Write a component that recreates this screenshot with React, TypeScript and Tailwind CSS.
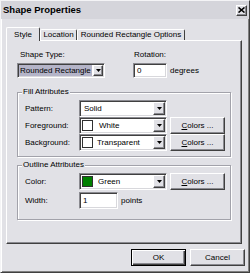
import type { ReactNode } from "react";

const sunken =
  "border border-t-[#8a8a90] border-l-[#8a8a90] border-r-white border-b-white shadow-[inset_1px_1px_0_#404040,inset_-1px_-1px_0_#d8d8dc]";
const raised =
  "border border-t-white border-l-white border-r-[#404040] border-b-[#404040] shadow-[inset_-1px_-1px_0_#8a8a90]";
const etched =
  "border border-[#a2a2aa] shadow-[1px_1px_0_#fff,inset_1px_1px_0_#fff]";

function DropArrow({ narrow }: { narrow?: boolean }) {
  return (
    <span
      className={`flex shrink-0 items-center justify-center bg-[#e1e1e6] ${raised} ${narrow ? "w-[10px]" : "w-[12px]"}`}
    >
      <svg width="5" height="3" viewBox="0 0 5 3">
        <path d="M0 0h5L2.5 3z" fill="#000" />
      </svg>
    </span>
  );
}

function Select({
  className,
  narrow,
  children,
}: {
  className: string;
  narrow?: boolean;
  children: ReactNode;
}) {
  return (
    <div className={`flex items-stretch bg-white p-[1px] ${sunken} ${className}`}>
      <div className="flex min-w-0 flex-1 items-center overflow-hidden whitespace-nowrap">{children}</div>
      <DropArrow narrow={narrow} />
    </div>
  );
}

function Swatch({ color }: { color: string }) {
  return <span className={`ml-[1px] h-[11px] w-[11px] shrink-0 border border-[#303030] ${color}`} />;
}

function Button({ children, isDefault }: { children: ReactNode; isDefault?: boolean }) {
  return (
    <button
      className={
        isDefault
          ? "flex h-[17px] w-[55px] items-center justify-center border border-black bg-[#e1e1e6] shadow-[inset_1px_1px_0_#fff,inset_-1px_-1px_0_#404040,inset_-2px_-2px_0_#8a8a90]"
          : `flex h-[17px] w-[55px] items-center justify-center bg-[#e1e1e6] ${raised}`
      }
    >
      {children}
    </button>
  );
}

function ColorsButton() {
  return (
    <div className="ml-[3px]">
      <Button>
        <span>
          <span className="underline">C</span>olors ...
        </span>
      </Button>
    </div>
  );
}

function Row({ label, children }: { label: string; children: ReactNode }) {
  return (
    <div className="flex h-[17px] items-center pl-[7px]">
      <span className="w-[54px] shrink-0">{label}</span>
      {children}
    </div>
  );
}

function Group({ title, className, children }: { title: string; className: string; children: ReactNode }) {
  return (
    <div className={`w-[214px] ${etched} ${className}`}>
      <div className="-mt-[6px] ml-[4px] w-fit bg-[#e1e1e6] px-[1px]">{title}</div>
      {children}
    </div>
  );
}

export default function App() {
  return (
    <div className="h-[273px] w-[250px] overflow-hidden border border-t-[#f4f4f6] border-l-[#f4f4f6] border-r-[#404040] border-b-[#404040] bg-[#e1e1e6] font-['Liberation_Sans',Arial,sans-serif] text-[8px] leading-[10px] text-black shadow-[inset_1px_1px_0_#fff,inset_-1px_-1px_0_#808080]">
      <div className="flex h-[18px] items-center justify-between bg-[#d5d5db] pl-[2px] pr-[2px]">
        <span className="text-[9.5px] font-bold leading-[12px]">Shape Properties</span>
        <span className={`flex h-[11px] w-[11px] items-center justify-center bg-[#e1e1e6] ${raised}`}>
          <svg width="7" height="6" viewBox="0 0 7 6">
            <path d="M0.5 0.5L6.5 5.5M6.5 0.5L0.5 5.5" stroke="#000" strokeWidth="1.6" />
          </svg>
        </span>
      </div>

      <div className="ml-[5px] mt-[8px] flex h-[13px] items-end">
        <div className="relative z-10 -mb-px flex h-[14px] w-[34px] items-start justify-center rounded-t-[2px] border-l border-t border-r border-l-white border-t-white border-r-[#404040] bg-[#e1e1e6] pt-[2px]">
          Style
        </div>
        <div className="flex h-[11px] w-[37px] items-center justify-center rounded-t-[2px] border-l border-t border-r border-l-white border-t-white border-r-[#404040]">
          Location
        </div>
        <div className="flex h-[11px] w-[108px] items-center justify-center rounded-t-[2px] border-l border-t border-r border-l-white border-t-white border-r-[#404040]">
          Rounded Rectangle Options
        </div>
      </div>

      <div className="ml-[5px] h-[204px] w-[236px] border border-t-white border-l-white border-r-[#404040] border-b-[#404040] pl-[10px] pt-[9px] shadow-[inset_-1px_-1px_0_#8a8a90]">
        <div className="flex">
          <div className="w-[116px]">
            <div className="pl-[3px]">Shape Type:</div>
            <Select className="mt-[3px] h-[15px] w-[88px]" narrow>
              <span className="bg-[#b4b4c8] pl-[1px] pr-[1px] leading-[11px]">Rounded Rectangle</span>
            </Select>
          </div>
          <div>
            <div className="pl-[1px]">Rotation:</div>
            <div className="mt-[3px] flex items-center">
              <div className={`flex h-[15px] w-[34px] items-center bg-white pl-[3px] ${sunken}`}>0</div>
              <span className="ml-[3px]">degrees</span>
            </div>
          </div>
        </div>

        <Group title="Fill Attributes" className="mt-[14px] pb-[5px]">
          <div className="mt-[3px]">
            <Row label="Pattern:">
              <Select className="h-[17px] w-[88px]">
                <span className="pl-[3px]">Solid</span>
              </Select>
            </Row>
            <Row label="Foreground:">
              <Select className="h-[17px] w-[88px]">
                <Swatch color="bg-white" />
                <span className="ml-[6px]">White</span>
              </Select>
              <ColorsButton />
            </Row>
            <Row label="Background:">
              <Select className="h-[17px] w-[88px]">
                <Swatch color="bg-white" />
                <span className="ml-[4px]">Transparent</span>
              </Select>
              <ColorsButton />
            </Row>
          </div>
        </Group>

        <Group title="Outline Attributes" className="mt-[8px] pb-[10px]">
          <div className="mt-[3px]">
            <Row label="Color:">
              <Select className="h-[17px] w-[88px]">
                <Swatch color="bg-[#008000]" />
                <span className="ml-[5px]">Green</span>
              </Select>
              <ColorsButton />
            </Row>
            <div className="mt-[2px]">
              <Row label="Width:">
                <div className={`flex h-[17px] w-[39px] items-center bg-white pl-[3px] ${sunken}`}>1</div>
                <span className="ml-[3px]">points</span>
              </Row>
            </div>
          </div>
        </Group>
      </div>

      <div className="mt-[5px] flex justify-end gap-[4px] pr-[4px]">
        <Button isDefault>OK</Button>
        <Button>Cancel</Button>
      </div>
    </div>
  );
}
